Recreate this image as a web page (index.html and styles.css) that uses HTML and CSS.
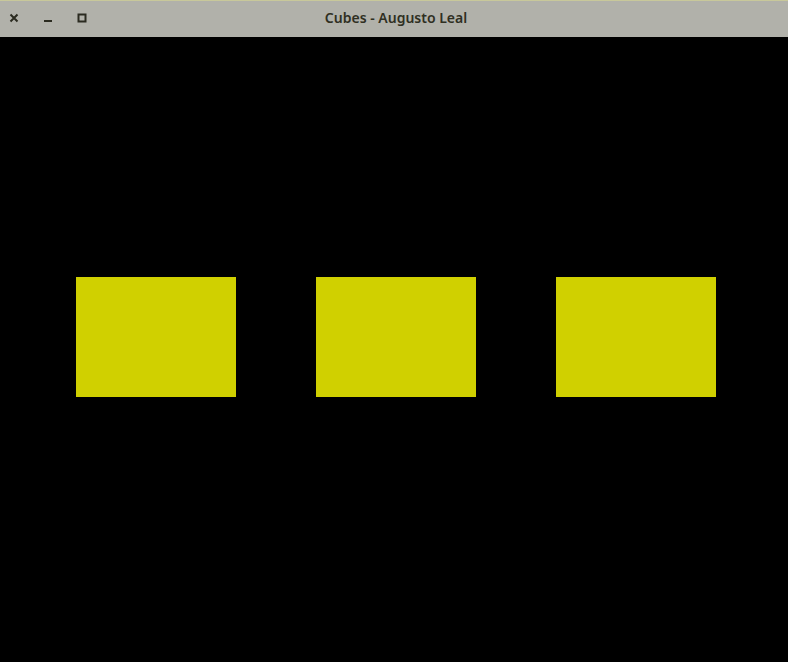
FILE: index.html
```
<!DOCTYPE html>
<html>
<head>
<meta charset="utf-8">
<link rel="stylesheet" href="styles.css">
</head>
<body>
<div class="window">
  <div class="titlebar">
    <div class="controls">
      <svg class="ctl" width="10" height="10" viewBox="0 0 10 10"><path d="M1.5 1.5 L8.5 8.5 M8.5 1.5 L1.5 8.5" stroke="#2b2b20" stroke-width="2"/></svg>
      <svg class="ctl" width="10" height="10" viewBox="0 0 10 10"><path d="M1 8 H9" stroke="#2b2b20" stroke-width="2"/></svg>
      <svg class="ctl" width="10" height="10" viewBox="0 0 10 10"><rect x="1.5" y="1.5" width="7" height="7" fill="none" stroke="#2b2b20" stroke-width="2"/></svg>
    </div>
    <div class="title">Cubes - Augusto Leal</div>
  </div>
  <div class="canvas">
    <div class="cube"></div>
    <div class="cube"></div>
    <div class="cube"></div>
  </div>
</div>
</body>
</html>
```
FILE: styles.css
```
html, body {
  margin: 0;
  padding: 0;
  background: #000;
}
.window {
  width: 788px;
  height: 662px;
  display: flex;
  flex-direction: column;
  background: #000;
}
.titlebar {
  height: 36px;
  border-top: 1px solid #c8c89a;
  background: #b1b1aa;
  position: relative;
  display: flex;
  align-items: center;
  justify-content: center;
  flex-shrink: 0;
}
.controls {
  position: absolute;
  left: 9px;
  top: 12px;
  display: flex;
  gap: 24px;
}
.ctl {
  display: block;
}
.title {
  font-family: "Noto Sans", "DejaVu Sans", sans-serif;
  font-size: 14px;
  font-weight: 600;
  color: #2f2f22;
  margin-left: 4px;
  margin-bottom: 4px;
}
.canvas {
  flex: 1;
  display: flex;
  gap: 80px;
  padding: 240px 0 0 76px;
}
.cube {
  width: 160px;
  height: 120px;
  background: #d0d000;
}
```
